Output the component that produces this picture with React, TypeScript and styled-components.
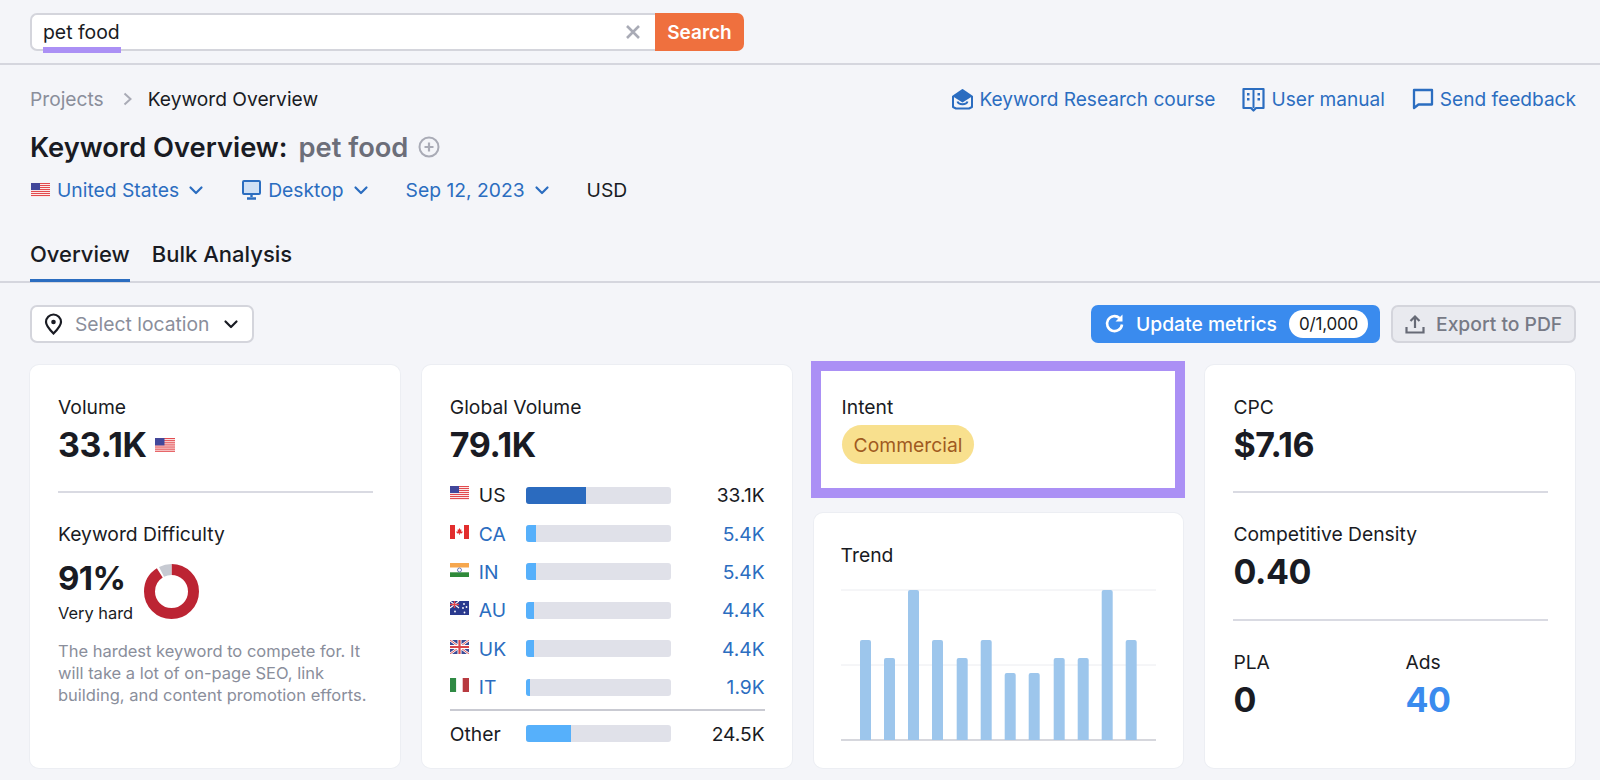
import React from "react";
import styled, { createGlobalStyle } from "styled-components";

const Global = createGlobalStyle`
  html, body { margin: 0; padding: 0; background: #f4f5f9; }
  body { font-family: Inter, "Liberation Sans", sans-serif; color: #191b23; overflow: hidden; height: 780px; }
  * { box-sizing: border-box; }
`;

const Page = styled.div`width: 1600px; height: 780px; overflow: hidden;`;
const TopBar = styled.div`height: 65px; padding: 13px 30px 0; border-bottom: 2px solid #d5d6de;`;
const SearchBox = styled.div`display: flex; width: 714px; height: 38px; position: relative;`;
const SearchInput = styled.div`
  flex: 1; display: flex; align-items: center; justify-content: space-between; padding: 0 14px 0 11px;
  background: #fff; border: 2px solid #d4d5dc; border-right: none; border-radius: 7px 0 0 7px;
  font-size: 19.4px;
`;
const SearchButton = styled.div`
  width: 89px; background: #ef703e; color: #fff; font-weight: 600; font-size: 19px;
  display: flex; align-items: center; justify-content: center; border-radius: 0 7px 7px 0;
`;
const Underline = styled.div`position: absolute; left: 13px; top: 34px; width: 78px; height: 6px; background: #ab90f5;`;
const Header = styled.div`height: 203px; padding: 0 24px 0 30px; border-bottom: 2px solid #d5d6de; position: relative;`;
const TopRow = styled.div`display: flex; justify-content: space-between; align-items: center; height: 38px; margin-top: 15px;`;
const Crumbs = styled.div`display: flex; align-items: center; font-size: 19.2px;`;
const CrumbMuted = styled.span`color: #8a8e9b;`;
const CrumbCurrent = styled.span`color: #191b23;`;
const CrumbSep = styled.span`display: flex; margin: 0 14px 0 17px;`;
const Links = styled.div`display: flex; align-items: center; gap: 27px;`;
const HelpLink = styled.div`display: flex; align-items: center; gap: 6px; color: #2b6dc0; font-size: 19.1px; white-space: nowrap;`;
const Title = styled.div`display: flex; align-items: center; height: 40px; margin-top: 9px; font-size: 27.3px; font-weight: 600; white-space: nowrap;`;
const TitleMuted = styled.span`color: #6c6e79; margin-left: 11px;`;
const PlusWrap = styled.span`display: flex; margin-left: 10px;`;
const Filters = styled.div`display: flex; align-items: center; height: 30px; margin-top: 8px; font-size: 19.3px;`;
const FilterItem = styled.div<{ $mr: number }>`
  display: flex; align-items: center; color: #2b6dc0; margin-right: ${(p) => p.$mr}px; white-space: nowrap;
`;
const FilterIcon = styled.span`display: flex; margin: 0 7px 0 1px;`;
const FilterChevron = styled.span`display: flex; margin-left: 9px;`;
const Usd = styled.span`color: #191b23;`;
const Tabs = styled.div`display: flex; align-items: flex-end; gap: 22px; position: absolute; left: 30px; bottom: -1px; height: 45px;`;
const Tab = styled.div<{ $active?: boolean }>`
  height: 100%; font-size: 22px; font-weight: 500; padding-top: 4px;
  border-bottom: 3px solid ${(p) => (p.$active ? "#2b6dc0" : "transparent")};
  color: #191b23;
`;
const Toolbar = styled.div`display: flex; justify-content: space-between; padding: 22px 24px 0 30px; height: 77px;`;
const LocationSelect = styled.div`
  width: 224px; height: 38px; display: flex; align-items: center; padding: 0 13px 0 12px;
  background: #fff; border: 2px solid #d4d5dc; border-radius: 7px; color: #8a8e9b; font-size: 19.3px;
`;
const LocationText = styled.span`margin-left: 12px; flex: 1;`;
const Actions = styled.div`display: flex; gap: 11px;`;
const UpdateButton = styled.div`
  width: 289px; height: 38px; background: #3a8bee; border-radius: 7px; color: #fff; font-size: 19.3px; font-weight: 500;
  display: flex; align-items: center; padding: 0 12px 0 13px;
`;
const UpdateLabel = styled.span`margin-left: 10px; flex: 1; white-space: nowrap;`;
const CountPill = styled.span`
  background: #fff; color: #191b23; border-radius: 14px; height: 28px; width: 79px; font-size: 17px; font-weight: 400;
  display: flex; align-items: center; justify-content: center; letter-spacing: -0.2px;
`;
const ExportButton = styled.div`
  width: 185px; height: 38px; background: #e9eaef; border: 2px solid #d4d5dc; border-radius: 7px; color: #777a86; font-size: 19.3px; font-weight: 500;
  display: flex; align-items: center; gap: 11px; padding-left: 12px; white-space: nowrap;
`;
const Grid = styled.div`
  display: grid; grid-template-columns: repeat(4, 369.8px); gap: 22px; padding: 5px 0 0 30px; align-items: stretch; height: 408px;
`;
const Card = styled.div`
  background: #fff; border-radius: 9px; box-shadow: 0 0 0 1px #eceef3; padding: 32px 27px 0 28px; height: 403px;
`;
const MiddleColumn = styled.div`display: flex; flex-direction: column; height: 403px; position: relative;`;
const IntentCard = styled.div`
  background: #fff; outline: 10px solid #ab90f5; outline-offset: 0; margin: 6px 8px 0 7px; height: 117px; padding: 26px 20px 0 21px;
`;
const TrendCard = styled(Card)`height: 255px; margin-top: 25px; padding: 32px 27px 0 27px;`;
const Label = styled.div`font-size: 19.3px; line-height: 20px;`;
const Value = styled.div<{ $blue?: boolean; $mt?: number }>`
  font-size: 34px; font-weight: 700; line-height: 40px; margin-top: ${(p) => p.$mt ?? 8}px; letter-spacing: -0.4px;
  display: flex; align-items: center; color: ${(p) => (p.$blue ? "#3a8bee" : "#191b23")};
`;
const ValueFlag = styled.span`display: flex; margin-left: 8px;`;
const Rule = styled.div`height: 2px; background: #d9dae2;`;
const FirstRule = styled(Rule)`margin-top: 26px; margin-bottom: 31px;`;
const KdRow = styled.div`display: flex; align-items: flex-start; margin-top: 13px;`;
const KdText = styled.div`width: 86px;`;
const KdValue = styled(Value)`margin-top: 0; font-size: 33px; letter-spacing: -0.6px; position: relative; top: 1px;`;
const KdSub = styled.div`font-size: 16.4px; line-height: 20px; margin-top: 6px; white-space: nowrap;`;
const Donut = styled.svg`display: block; margin-top: 7px;`;
const Description = styled.p`margin: 17px 0 0; font-size: 16.5px; line-height: 22px; color: #8a8e9b;`;
const CountryList = styled.div`margin-top: 11px;`;
const CountryRow = styled.div`display: grid; grid-template-columns: 29px 47px 145px 1fr; align-items: center; height: 38.4px;`;
const CountryFlag = styled.span`display: flex; margin-top: -4px;`;
const CountryCode = styled.span<{ $link?: boolean }>`font-size: 19.3px; color: ${(p) => (p.$link ? "#2b6dc0" : "#191b23")};`;
const CountryValue = styled.span<{ $link?: boolean }>`
  text-align: right; font-size: 19.2px; color: ${(p) => (p.$link ? "#2b6dc0" : "#191b23")};
`;
const Bar = styled.div`height: 17px; background: #e0e1e9; border-radius: 3px; overflow: hidden;`;
const BarFill = styled.div<{ $dark?: boolean }>`height: 100%; background: ${(p) => (p.$dark ? "#2b6bbf" : "#56b0fb")};`;
const ListRule = styled(Rule)`margin: 3px 0 3px; background: #c9cad2;`;
const OtherLabel = styled.span`grid-column: span 2; font-size: 19.3px;`;
const Pill = styled.div`
  display: inline-flex; align-items: center; height: 39px; padding: 0 12px; margin-top: 8px; border-radius: 20px;
  background: #f8e08e; color: #a05a1f; font-size: 19.3px;
`;
const Chart = styled.svg`display: block; margin-top: 24px;`;
const SecondRule = styled(Rule)`margin-top: 27px; margin-bottom: 31px;`;
const Split = styled.div`display: grid; grid-template-columns: 172px 1fr;`;

const UsFlag = ({ w = 19 }: { w?: number }) => (
  <svg width={w} height={w * 0.74} viewBox="0 0 19 14">
    <rect width="19" height="14" fill="#fff" />
    {[0, 2, 4, 6, 8, 10, 12].map((y) => <rect key={y} y={y} width="19" height="1.1" fill="#e2474b" />)}
    <rect width="9" height="7" fill="#41479b" />
  </svg>
);
const CaFlag = () => (
  <svg width="19" height="14" viewBox="0 0 19 14">
    <rect width="19" height="14" fill="#fff" />
    <rect width="5" height="14" fill="#e22d2d" /><rect x="14" width="5" height="14" fill="#e22d2d" />
    <path d="M9.5 3l1 1.800 1-.4-.4 2.400 1.300-.6.3 1-1.200 1.200-1.600-.2v1.500h-.8v-1.500l-1.600.2-1.200-1.200.3-1 1.300.6-.4-2.400 1 .4z" fill="#e22d2d" />
  </svg>
);
const InFlag = () => (
  <svg width="19" height="14" viewBox="0 0 19 14">
    <rect width="19" height="4.700" fill="#f6a74e" /><rect y="4.700" width="19" height="4.600" fill="#fff" /><rect y="9.300" width="19" height="4.700" fill="#2f8a3a" />
    <circle cx="9.500" cy="7" r="2" fill="none" stroke="#4a5fa8" strokeWidth=".8" />
  </svg>
);
const AuFlag = () => (
  <svg width="19" height="14" viewBox="0 0 19 14">
    <rect width="19" height="14" fill="#2a3a8e" />
    <path d="M0 0l9 7M9 0L0 7" stroke="#fff" strokeWidth="1.100" />
    <path d="M4.500 0v7M0 3.500h9" stroke="#e2474b" strokeWidth="1.400" />
    {[[14, 3], [16.500, 6], [13, 7], [14.500, 11.500], [5, 10.500]].map(([x, y]) => <circle key={`${x}-${y}`} cx={x} cy={y} r=".9" fill="#fff" />)}
  </svg>
);
const UkFlag = () => (
  <svg width="19" height="14" viewBox="0 0 19 14">
    <rect width="19" height="14" fill="#3a4a96" />
    <path d="M0 0l19 14M19 0L0 14" stroke="#fff" strokeWidth="2.400" />
    <path d="M0 0l19 14M19 0L0 14" stroke="#d8464a" strokeWidth=".9" />
    <path d="M9.500 0v14M0 7h19" stroke="#fff" strokeWidth="4" />
    <path d="M9.500 0v14M0 7h19" stroke="#d8464a" strokeWidth="2.200" />
  </svg>
);
const ItFlag = () => (
  <svg width="19" height="14" viewBox="0 0 19 14">
    <rect width="6.300" height="14" fill="#2f8a44" /><rect x="6.300" width="6.400" height="14" fill="#fff" /><rect x="12.700" width="6.300" height="14" fill="#b83a40" />
  </svg>
);
const Chevron = ({ color = "#2b6dc0", size = 16 }: { color?: string; size?: number }) => (
  <svg width={size} height={size} viewBox="0 0 16 16" fill="none">
    <path d="M2.500 5.500L8 11l5.500-5.500" stroke={color} strokeWidth="2.200" strokeLinecap="round" strokeLinejoin="round" />
  </svg>
);

const rows = [
  { code: "US", Flag: UsFlag, fill: 60, value: "33.1K", link: false, dark: true },
  { code: "CA", Flag: CaFlag, fill: 10, value: "5.4K", link: true },
  { code: "IN", Flag: InFlag, fill: 10, value: "5.4K", link: true },
  { code: "AU", Flag: AuFlag, fill: 8, value: "4.4K", link: true },
  { code: "UK", Flag: UkFlag, fill: 8, value: "4.4K", link: true },
  { code: "IT", Flag: ItFlag, fill: 4, value: "1.9K", link: true },
];
const trend = [100, 82, 150, 100, 82, 100, 67, 67, 82, 82, 150, 100];
const trendX = [19, 43, 67, 91, 115.7, 139.7, 163.7, 187.7, 212.7, 236.7, 260.7, 284.7];

export default function App() {
  return (
    <Page>
      <Global />
      <TopBar>
        <SearchBox>
          <SearchInput>
            pet food
            <svg width="16" height="16" viewBox="0 0 16 16" fill="none"><path d="M2 2l12 12M14 2L2 14" stroke="#a9abb6" strokeWidth="2.600" /></svg>
          </SearchInput>
          <SearchButton>Search</SearchButton>
          <Underline />
        </SearchBox>
      </TopBar>
      <Header>
        <TopRow>
          <Crumbs>
            <CrumbMuted>Projects</CrumbMuted>
            <CrumbSep><svg width="13" height="16" viewBox="0 0 13 16" fill="none"><path d="M3.500 2.500L9.500 8l-6 5.500" stroke="#a9abb6" strokeWidth="2" /></svg></CrumbSep>
            <CrumbCurrent>Keyword Overview</CrumbCurrent>
          </Crumbs>
          <Links>
            <HelpLink>
              <svg width="23" height="22" viewBox="0 0 23 22" fill="none">
                <path d="M2 8.500L11.500 2 21 8.500V19l-3 1.500h-13L2 19z" stroke="#2b6dc0" strokeWidth="2" strokeLinejoin="round" />
                <path d="M2 8.500l9.500 6 9.500-6-9.500-6z" fill="#2b6dc0" />
                <path d="M6.500 13.500c1 3.500 9 3.500 10 0" stroke="#2b6dc0" strokeWidth="2" />
              </svg>
              Keyword Research course
            </HelpLink>
            <HelpLink>
              <svg width="23" height="25" viewBox="0 0 23 25" fill="none">
                <path d="M1.500 2h20v19h-7.500l-2.500 2.500L9 21H1.500z" stroke="#2b6dc0" strokeWidth="2.200" strokeLinejoin="round" />
                <path d="M11.500 2v19" stroke="#2b6dc0" strokeWidth="2" />
                <path d="M5 6h2.500v2.500H5zM5 11h2.500v2.500H5zM15.500 6H18v2.500h-2.500zM15.500 11H18v2.500h-2.500z" fill="#2b6dc0" />
              </svg>
              User manual
            </HelpLink>
            <HelpLink>
              <svg width="22" height="22" viewBox="0 0 22 22" fill="none">
                <path d="M2 2h18v14.500H6.500L2 20z" stroke="#2b6dc0" strokeWidth="2.300" strokeLinejoin="round" />
              </svg>
              Send feedback
            </HelpLink>
          </Links>
        </TopRow>
        <Title>
          Keyword Overview:
          <TitleMuted>pet food</TitleMuted>
          <PlusWrap>
            <svg width="22" height="22" viewBox="0 0 22 22" fill="none">
              <circle cx="11" cy="11" r="9.500" stroke="#a9abb6" strokeWidth="2" />
              <path d="M11 6.500v9M6.500 11h9" stroke="#a9abb6" strokeWidth="2.200" />
            </svg>
          </PlusWrap>
        </Title>
        <Filters>
          <FilterItem $mr={37}>
            <FilterIcon><UsFlag /></FilterIcon>
            United States
            <FilterChevron><Chevron /></FilterChevron>
          </FilterItem>
          <FilterItem $mr={37}>
            <FilterIcon>
              <svg width="19" height="20" viewBox="0 0 19 20" fill="none">
                <rect x="1" y="1" width="17" height="13" rx="1" fill="#cfe0f5" stroke="#2b6dc0" strokeWidth="2" />
                <path d="M9.500 14v3M5 18.500h9" stroke="#2b6dc0" strokeWidth="2.400" />
              </svg>
            </FilterIcon>
            Desktop
            <FilterChevron><Chevron /></FilterChevron>
          </FilterItem>
          <FilterItem $mr={37}>
            Sep 12, 2023
            <FilterChevron><Chevron /></FilterChevron>
          </FilterItem>
          <Usd>USD</Usd>
        </Filters>
        <Tabs>
          <Tab $active>Overview</Tab>
          <Tab>Bulk Analysis</Tab>
        </Tabs>
      </Header>
      <Toolbar>
        <LocationSelect>
          <svg width="19" height="22" viewBox="0 0 19 22" fill="none">
            <path d="M9.500 20.500c4-4 7.500-7.500 7.500-11.500a7.500 7.500 0 0 0-15 0c0 4 3.500 7.500 7.500 11.500z" stroke="#191b23" strokeWidth="2.200" />
            <circle cx="9.500" cy="9" r="2.300" fill="#191b23" />
          </svg>
          <LocationText>Select location</LocationText>
          <Chevron color="#191b23" />
        </LocationSelect>
        <Actions>
          <UpdateButton>
            <svg width="22" height="22" viewBox="0 0 22 22" fill="none">
              <path d="M18 11.500A7.500 7.500 0 1 1 15.500 5" stroke="#fff" strokeWidth="2.600" />
              <path d="M18.500 1.500v7h-7z" fill="#fff" />
            </svg>
            <UpdateLabel>Update metrics</UpdateLabel>
            <CountPill>0/1,000</CountPill>
          </UpdateButton>
          <ExportButton>
            <svg width="20" height="20" viewBox="0 0 20 20" fill="none">
              <path d="M10 14V3M5.500 7L10 2.500 14.500 7" stroke="#676a76" strokeWidth="2.200" />
              <path d="M1.500 13v5.500h17V13" stroke="#676a76" strokeWidth="2.200" />
            </svg>
            Export to PDF
          </ExportButton>
        </Actions>
      </Toolbar>
      <Grid>
        <Card>
          <Label>Volume</Label>
          <Value>33.1K<ValueFlag><UsFlag w={20} /></ValueFlag></Value>
          <FirstRule />
          <Label>Keyword Difficulty</Label>
          <KdRow>
            <KdText>
              <KdValue>91%</KdValue>
              <KdSub>Very hard</KdSub>
            </KdText>
            <Donut width="55" height="55" viewBox="0 0 55 55">
              <g fill="none" strokeWidth="11" transform="rotate(-90 27.500 27.500)">
                <circle cx="27.500" cy="27.500" r="22" stroke="#bc2433" strokeDasharray="125 138.230" />
                <circle cx="27.500" cy="27.500" r="22" stroke="#c7cad2" strokeDasharray="10.500 138.230" strokeDashoffset="-127" />
              </g>
            </Donut>
          </KdRow>
          <Description>The hardest keyword to compete for. It will take a lot of on-page SEO, link building, and content promotion efforts.</Description>
        </Card>
        <Card>
          <Label>Global Volume</Label>
          <Value>79.1K</Value>
          <CountryList>
            {rows.map(({ code, Flag, fill, value, link, dark }) => (
              <CountryRow key={code}>
                <CountryFlag><Flag /></CountryFlag>
                <CountryCode $link={link}>{code}</CountryCode>
                <Bar><BarFill $dark={dark} style={{ width: fill }} /></Bar>
                <CountryValue $link={link}>{value}</CountryValue>
              </CountryRow>
            ))}
            <ListRule />
            <CountryRow>
              <OtherLabel>Other</OtherLabel>
              <Bar><BarFill style={{ width: 45 }} /></Bar>
              <CountryValue>24.5K</CountryValue>
            </CountryRow>
          </CountryList>
        </Card>
        <MiddleColumn>
          <IntentCard>
            <Label>Intent</Label>
            <Pill>Commercial</Pill>
          </IntentCard>
          <TrendCard>
            <Label>Trend</Label>
            <Chart width="315" height="152" viewBox="0 0 315 152">
              <path d="M0 1h315M0 76h315" stroke="#ebecf0" strokeWidth="1" />
              <path d="M0 151h315" stroke="#c9cad2" strokeWidth="1.500" />
              {trend.map((h, i) => (
                <path
                  key={i}
                  d={`M${trendX[i]} 151v-${h - 2}a2 2 0 0 1 2-2h7a2 2 0 0 1 2 2v${h - 2}z`}
                  fill="#9dc6ec"
                />
              ))}
            </Chart>
          </TrendCard>
        </MiddleColumn>
        <Card>
          <Label>CPC</Label>
          <Value>$7.16</Value>
          <FirstRule />
          <Label>Competitive Density</Label>
          <Value>0.40</Value>
          <SecondRule />
          <Split>
            <div>
              <Label>PLA</Label>
              <Value>0</Value>
            </div>
            <div>
              <Label>Ads</Label>
              <Value $blue>40</Value>
            </div>
          </Split>
        </Card>
      </Grid>
    </Page>
  );
}
